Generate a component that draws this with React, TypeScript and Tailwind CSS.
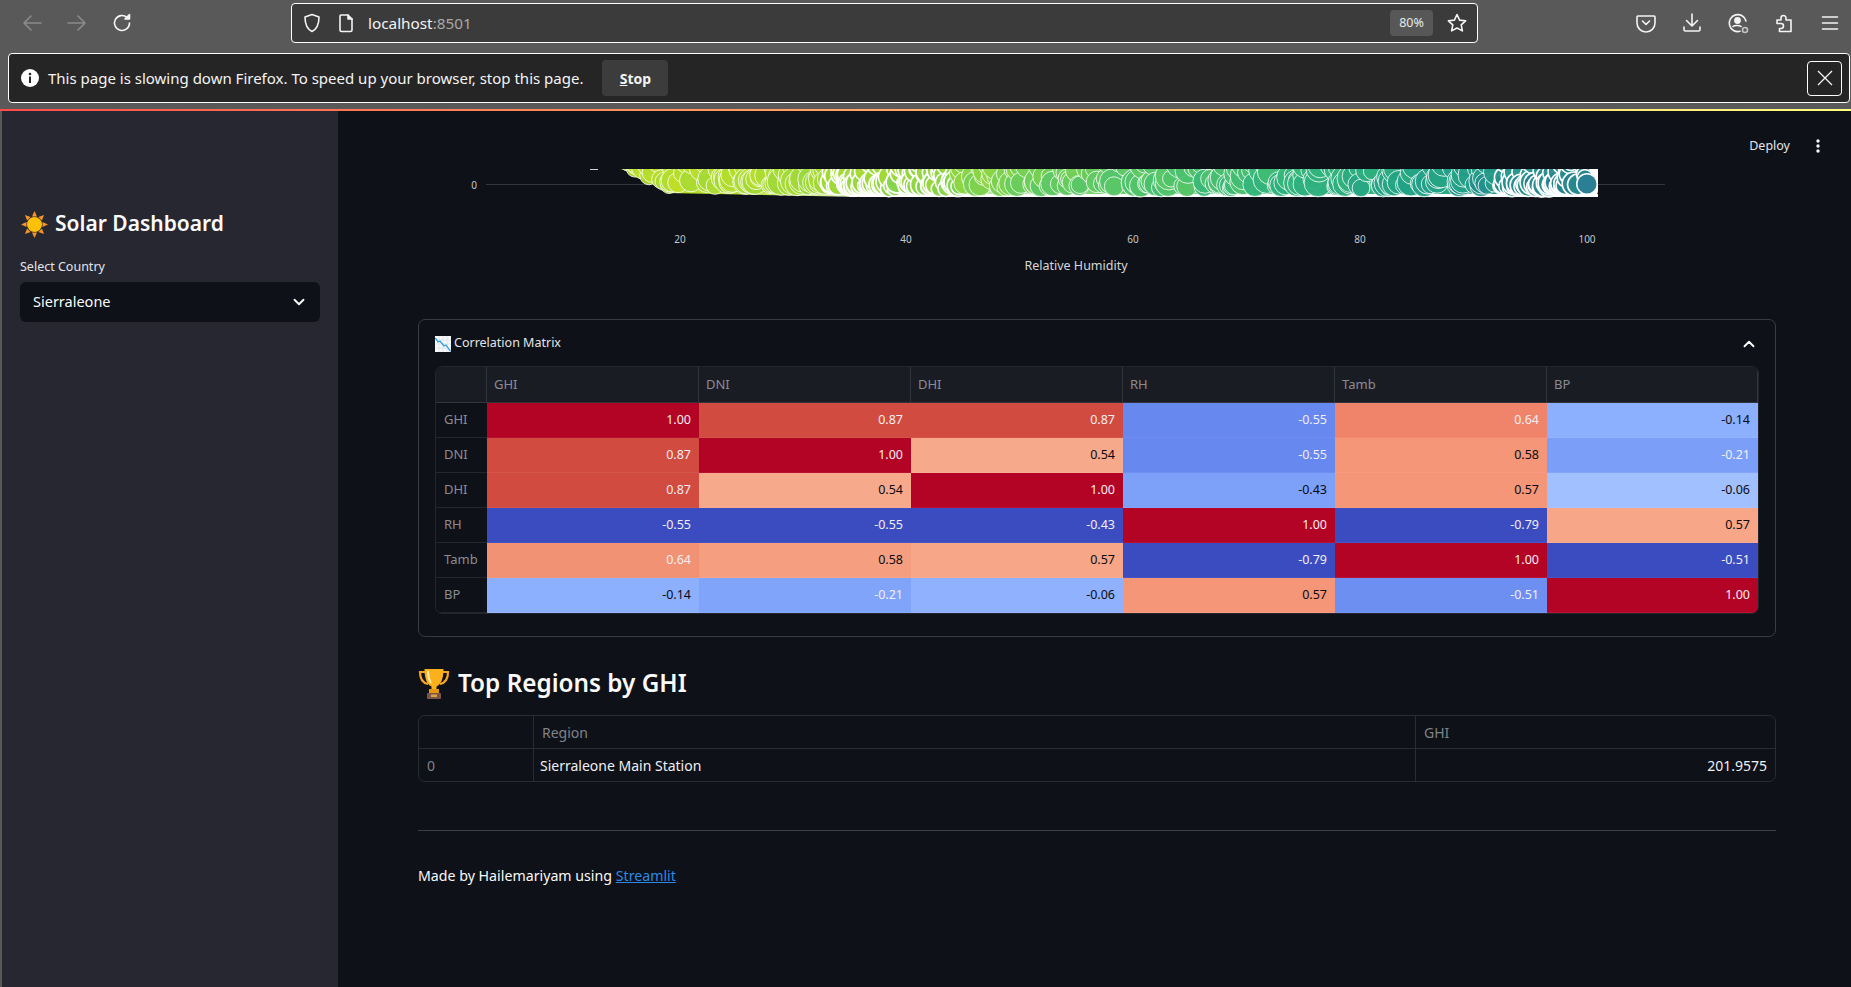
import React from 'react';
import { ChevronDown, ChevronUp } from 'lucide-react';

type Cell = { v: string; c: string };

const L = 'text-[#f3eef2]';
const D = 'text-[#0b0b10]';

const columns = ['GHI', 'DNI', 'DHI', 'RH', 'Tamb', 'BP'];

// correlation matrix, colours read off the reference
const matrix: { name: string; cells: Cell[] }[] = [
    {
        name: 'GHI',
        cells: [
            { v: '1.00', c: `bg-[#b40426] ${L}` },
            { v: '0.87', c: `bg-[#d24b40] ${L}` },
            { v: '0.87', c: `bg-[#d24b40] ${L}` },
            { v: '-0.55', c: `bg-[#6788ee] ${L}` },
            { v: '0.64', c: `bg-[#f0846a] ${L}` },
            { v: '-0.14', c: `bg-[#8caffe] ${D}` },
        ],
    },
    {
        name: 'DNI',
        cells: [
            { v: '0.87', c: `bg-[#d24b40] ${L}` },
            { v: '1.00', c: `bg-[#b40426] ${L}` },
            { v: '0.54', c: `bg-[#f7a98b] ${D}` },
            { v: '-0.55', c: `bg-[#6788ee] ${L}` },
            { v: '0.58', c: `bg-[#f59679] ${D}` },
            { v: '-0.21', c: `bg-[#7b9ff9] ${L}` },
        ],
    },
    {
        name: 'DHI',
        cells: [
            { v: '0.87', c: `bg-[#d24b40] ${L}` },
            { v: '0.54', c: `bg-[#f7a98b] ${D}` },
            { v: '1.00', c: `bg-[#b40426] ${L}` },
            { v: '-0.43', c: `bg-[#7da0f9] ${D}` },
            { v: '0.57', c: `bg-[#f59679] ${D}` },
            { v: '-0.06', c: `bg-[#a1c0ff] ${D}` },
        ],
    },
    {
        name: 'RH',
        cells: [
            { v: '-0.55', c: `bg-[#3b4cc0] ${L}` },
            { v: '-0.55', c: `bg-[#3b4cc0] ${L}` },
            { v: '-0.43', c: `bg-[#3b4cc0] ${L}` },
            { v: '1.00', c: `bg-[#b40426] ${L}` },
            { v: '-0.79', c: `bg-[#3b4cc0] ${L}` },
            { v: '0.57', c: `bg-[#f7a688] ${D}` },
        ],
    },
    {
        name: 'Tamb',
        cells: [
            { v: '0.64', c: `bg-[#f29274] ${L}` },
            { v: '0.58', c: `bg-[#f59f80] ${D}` },
            { v: '0.57', c: `bg-[#f7a688] ${D}` },
            { v: '-0.79', c: `bg-[#3b4cc0] ${L}` },
            { v: '1.00', c: `bg-[#b40426] ${L}` },
            { v: '-0.51', c: `bg-[#3b4cc0] ${L}` },
        ],
    },
    {
        name: 'BP',
        cells: [
            { v: '-0.14', c: `bg-[#8caffe] ${D}` },
            { v: '-0.21', c: `bg-[#81a4fb] ${L}` },
            { v: '-0.06', c: `bg-[#8fb1fe] ${D}` },
            { v: '0.57', c: `bg-[#f59679] ${D}` },
            { v: '-0.51', c: `bg-[#6c8ff1] ${L}` },
            { v: '1.00', c: `bg-[#b40426] ${L}` },
        ],
    },
];

// seeded so every render draws the same bubbles
function makeRandom(seed: number) {
    let s = seed;
    return () => {
        s = (s * 1664525 + 1013904223) % 4294967296;
        return s / 4294967296;
    };
}

const stops: [number, number, number][] = [
    [190, 223, 38],
    [150, 215, 60],
    [94, 201, 98],
    [53, 183, 121],
    [33, 160, 135],
    [38, 130, 142],
];

function viridis(t: number) {
    const p = Math.min(0.999, Math.max(0, t)) * (stops.length - 1);
    const i = Math.floor(p);
    const f = p - i;
    const a = stops[i];
    const b = stops[i + 1];
    return `rgb(${a.map((n, k) => Math.round(n + (b[k] - n) * f)).join(',')})`;
}

// chart origin is 418px from the window's left, main's top from its top
const X0 = 618 - 418;
const X1 = 1598 - 418;

function bottomEdge(x: number) {
    const px = x + 418;
    if (px < 665) return 58 + ((px - 618) / 47) * 24;
    if (px < 860) return 83 + ((px - 665) / 195) * 3;
    return 86;
}

function makeBubbles() {
    const rand = makeRandom(42);
    const out: { x: number; y: number; r: number; fill: string; w: number }[] = [];
    for (let x = X0 + 10; x < X1 - 12; x += 1) {
        const px = x + 418;
        // colour scale bends: lime holds until well past the middle
        const t = Math.pow((px - 618) / 980, 1.4);
        const whiteZone = (px > 830 && px < 960) || px > 1500;
        // most of the plot is sparse enough that whole bubbles stay visible
        if (!whiteZone && rand() > 0.42) continue;
        if (whiteZone && rand() > 0.8) continue;
        const r = whiteZone ? 7 + rand() * 5 : 8 + rand() * 6;
        const low = rand() < 0.4;
        const bottom = bottomEdge(x);
        const y = low ? bottom - r - rand() * 4 : 50 + rand() * Math.max(4, bottom - r - 50);
        out.push({
            x,
            y,
            r,
            fill: viridis(t + (low ? 0.06 : 0) + (rand() - 0.5) * 0.07),
            w: whiteZone ? 1.6 : 0.8,
        });
    }
    return out;
}

const bubbles = makeBubbles();

function BubbleChart() {
    return (
        <svg width="1357" height="208" viewBox="0 0 1357 208" className="block">
            <defs>
                <clipPath id="plot">
                    <rect x="0" y="58" width="1180" height="60" />
                </clipPath>
                <linearGradient id="band" gradientUnits="userSpaceOnUse" x1="200" x2="1180" y1="0" y2="0">
                    <stop offset="0" stopColor="#bfdf30" />
                    <stop offset="0.12" stopColor="#b5de2b" />
                    <stop offset="0.24" stopColor="#dff2c8" />
                    <stop offset="0.33" stopColor="#cfeec0" />
                    <stop offset="0.5" stopColor="#70cf66" />
                    <stop offset="0.76" stopColor="#36b67a" />
                    <stop offset="0.92" stopColor="#24a08a" />
                    <stop offset="1" stopColor="#e8f2f4" />
                </linearGradient>
            </defs>
            <line x1="68" x2="1247" y1="73.5" y2="73.5" stroke="#33363e" />
            <text x="59" y="78" textAnchor="end" fontSize="10" fill="#c4c6cc">0</text>
            <g clipPath="url(#plot)">
                <rect x="172" y="58" width="8" height="1" fill="#cfd0d2" />
                <rect x="1130" y="40" width="50" height="46" rx="6" fill="#ffffff" />
                <path d="M202 58 225 62 243 72 249 82 442 86H1170V58Z" fill="url(#band)" />
                <rect x="442" y="83" width="738" height="3" fill="#ffffff" />
                {bubbles.map((b, i) => (
                    <circle key={i} cx={b.x} cy={b.y} r={b.r} fill={b.fill} fillOpacity={0.94} stroke="#ffffff" strokeWidth={b.w} />
                ))}
                <circle cx="1169" cy="73" r="11" fill="#ffffff" />
                <circle cx="1169" cy="73" r="9.500" fill="#2a7f94" />
            </g>
            {[
                { x: 262, t: '20' },
                { x: 488, t: '40' },
                { x: 715, t: '60' },
                { x: 942, t: '80' },
                { x: 1169, t: '100' },
            ].map((tick) => (
                <text key={tick.t} x={tick.x} y="132" textAnchor="middle" fontSize="10" fill="#c4c6cc">
                    {tick.t}
                </text>
            ))}
            <text x="658" y="159" textAnchor="middle" fontSize="12.500" fill="#d6d7da">Relative Humidity</text>
        </svg>
    );
}

function SunEmoji() {
    const rays = [0, 45, 90, 135, 180, 225, 270, 315];
    return (
        <svg width="27" height="27" viewBox="0 0 27 27" className="shrink-0">
            {rays.map((deg) => (
                <path key={deg} d="M11 5.500 13.500 0 16 5.500Z" fill="#f79329" transform={`rotate(${deg} 13.500 13.500)`} />
            ))}
            <circle cx="13.500" cy="13.500" r="7.500" fill="#ffc107" />
        </svg>
    );
}

function ChartEmoji() {
    return (
        <svg width="16" height="16" viewBox="0 0 16 16" className="shrink-0">
            <rect width="16" height="16" fill="#f5f7f9" />
            <path d="M0 4h16M0 8h16M0 12h16M4 0v16M8 0v16M12 0v16" stroke="#c9d6e2" strokeWidth="0.5" />
            <path d="M0.500 2 3 6 5 5 9 10 11 9 15.500 15.500" fill="none" stroke="#2d9be0" strokeWidth="1.300" />
        </svg>
    );
}

function TrophyEmoji() {
    return (
        <svg width="32" height="32" viewBox="0 0 32 32" className="shrink-0">
            <path d="M7 4H2c0 7 3 11 8 12M25 4h5c0 7-3 11-8 12" fill="none" stroke="#f5a623" strokeWidth="2.200" />
            <path d="M6.500 1h19c0 9-2 15-7 17.500v3h-5v-3C8.500 16 6.500 10 6.500 1Z" fill="#fbb11c" />
            <path d="M10 3c0 5 1 9 3 12" fill="none" stroke="#ffe9a8" strokeWidth="2" />
            <rect x="11" y="21" width="10" height="4" fill="#e8960f" />
            <rect x="9" y="25" width="14" height="6" rx="1" fill="#7a5548" />
            <rect x="13" y="26.500" width="6" height="2.500" fill="#d9a441" />
        </svg>
    );
}

// Firefox toolbar icons, drawn to match its own glyphs
function ToolIcon({ children, className, size = 22 }: { children: React.ReactNode; className?: string; size?: number }) {
    return (
        <svg width={size} height={size} viewBox="0 0 22 22" fill="none" stroke="currentColor" strokeWidth="1.600" strokeLinecap="round" strokeLinejoin="round" className={className}>
            {children}
        </svg>
    );
}

function Toolbar() {
    return (
        <div className="h-[46px] mb-[7px] flex items-center shrink-0">
            <div className="flex items-center gap-[23px] ml-[21px] w-[270px]">
                <ToolIcon className="text-[#8b8b8b]"><path d="M20 11H3M10 4l-7 7 7 7" /></ToolIcon>
                <ToolIcon className="text-[#8b8b8b]"><path d="M2 11h17M12 4l7 7-7 7" /></ToolIcon>
                <ToolIcon className="text-[#f4f4f4]">
                    <path d="M18.500 11a7.500 7.500 0 1 1-2.500-5.600" />
                    <path d="M18.500 2.500V7h-4.500z" fill="currentColor" />
                </ToolIcon>
            </div>
            <div className="w-[1187px] h-[40px] rounded-[4px] border border-white bg-[#3b3b3b] flex items-center pl-[9px] pr-[8px]">
                <ToolIcon className="text-[#f4f4f4]"><path d="M11 2.500 18 5c0 7-2 12-7 14.500C6 17 4 12 4 5z" /></ToolIcon>
                <ToolIcon className="text-[#f4f4f4] ml-[12px]"><path d="M6 3h7l4 4v11a1.500 1.500 0 0 1-1.500 1.500h-9A1.500 1.500 0 0 1 5 18V4a1 1 0 0 1 1-1Z" /><path d="M13 3v4h4" fill="currentColor" /></ToolIcon>
                <span className="ml-[11px] text-[15.300px] text-[#f4f4f4]">localhost<span className="text-[#a8a8a8]">:8501</span></span>
                <div className="ml-auto w-[43px] h-[26px] rounded-[4px] bg-[#575757] flex items-center justify-center text-[12.500px] text-[#e8e8e8]">80%</div>
                <ToolIcon className="text-[#f4f4f4] ml-[13px] mr-[1px]"><path d="m11 2.500 2.600 5.600 6 .7-4.400 4.100 1.200 6L11 16l-5.400 2.900 1.200-6L2.400 8.800l6-.7z" /></ToolIcon>
            </div>
            <div className="flex items-center ml-[157px] gap-[24px]">
                <ToolIcon className="text-[#f4f4f4]">
                    <path d="M3 4h16a1 1 0 0 1 1 1v6a9 9 0 0 1-18 0V5a1 1 0 0 1 1-1Z" />
                    <path d="m7.500 9 3.500 3.500L14.500 9" />
                </ToolIcon>
                <ToolIcon className="text-[#f4f4f4]">
                    <path d="M11 2v11.500M5.500 8.500l5.500 5.500 5.500-5.500M3 15v2.500A1.500 1.500 0 0 0 4.500 19h13a1.500 1.500 0 0 0 1.500-1.500V15" />
                </ToolIcon>
                <ToolIcon className="text-[#f4f4f4]">
                    <path d="M19 9a8.500 8.500 0 1 0-6 10.300" />
                    <circle cx="10.500" cy="8.500" r="2.600" fill="currentColor" />
                    <path d="M6 14.500c1-1.300 7-1.300 8 0" />
                    <circle cx="18" cy="18" r="2.500" stroke="#c4c4c4" />
                </ToolIcon>
                <ToolIcon className="text-[#f4f4f4]">
                    <path d="M4 8h4V6a2.500 2.500 0 0 1 5 0v2h5v11.500H6.500v-3H8a2.500 2.500 0 0 0 0-5H4z" />
                </ToolIcon>
                <ToolIcon className="text-[#f4f4f4]"><path d="M3.500 5h15M3.500 11h15M3.500 17h15" /></ToolIcon>
            </div>
        </div>
    );
}

function SlowPageBar() {
    return (
        <div className="ml-[8px] mr-[1px] h-[50px] shrink-0 rounded-[4px] border border-white bg-[#252525] flex items-center pl-[12px] pr-[7px]">
            <svg width="18" height="18" viewBox="0 0 18 18" className="shrink-0">
                <circle cx="9" cy="9" r="9" fill="#ffffff" />
                <rect x="8" y="7.500" width="2" height="6.500" fill="#252525" />
                <circle cx="9" cy="5" r="1.300" fill="#252525" />
            </svg>
            <span className="ml-[9px] text-[15px] text-[#f4f4f4] whitespace-nowrap">This page is slowing down Firefox. To speed up your browser, stop this page.</span>
            <div className="ml-[19px] w-[66px] h-[36px] rounded-[4px] bg-[#3c3c3c] flex items-center justify-center text-[14px] font-bold text-[#f4f4f4]"><span><u>S</u>top</span></div>
            <div className="ml-auto w-[35px] h-[35px] rounded-[4px] border border-white flex items-center justify-center">
                <svg width="16" height="16" viewBox="0 0 16 16" stroke="#f4f4f4" strokeWidth="1.300"><path d="M1 1l14 14M15 1 1 15" /></svg>
            </div>
        </div>
    );
}

function Sidebar() {
    return (
        <aside className="ml-[2px] w-[336px] shrink-0 bg-[#262730] px-[18px] pt-[98px]">
            <div className="flex items-center gap-[7px] ml-[1px] h-[30px]">
                <SunEmoji />
                <span className="text-[21px] font-semibold text-[#fafafa] whitespace-nowrap">Solar Dashboard</span>
            </div>
            <div className="mt-[18px] text-[12.500px] text-[#e4e4e8] leading-[20px]">Select Country</div>
            <div className="mt-[5px] h-[40px] rounded-[6px] bg-[#0e1117] flex items-center justify-between pl-[13px] pr-[12px] text-[14.500px] text-[#fafafa]">
                Sierraleone
                <ChevronDown size={18} strokeWidth={2.500} />
            </div>
        </aside>
    );
}

function CorrelationMatrix() {
    return (
        <div className="rounded-[7px] border border-[#3a3c44] px-[16px] pb-[22px]">
            <div className="h-[46px] flex items-center pt-[1px]">
                <ChartEmoji />
                <span className="ml-[3px] text-[12.500px] text-[#e4e4e8]">Correlation Matrix</span>
                <ChevronUp size={18} strokeWidth={2.500} className="ml-auto mr-[1px] text-[#fafafa]" />
            </div>
            <div className="rounded-[7px] border border-[#24262d] overflow-hidden grid grid-cols-[51px_repeat(5,212px)_211px] text-[12.500px]">
                <div className="h-[36px] bg-[#1a1c24] border-r border-b border-[#33353d]" />
                {columns.map((col) => (
                    <div key={col} className="h-[36px] bg-[#1a1c24] border-r border-b border-[#33353d] flex items-center pl-[7px] text-[13px] text-[#8a8c94]">{col}</div>
                ))}
                {matrix.map((row) => (
                    <React.Fragment key={row.name}>
                        <div className="h-[35px] border-b border-[#24262d] flex items-center pl-[8px] text-[13px] text-[#8a8c94]">{row.name}</div>
                        {row.cells.map((cell, i) => (
                            <div key={i} className={`h-[35px] border-b border-white/5 flex items-center justify-end pr-[8px] ${cell.c}`}>{cell.v}</div>
                        ))}
                    </React.Fragment>
                ))}
            </div>
        </div>
    );
}

function TopRegions() {
    return (
        <div className="rounded-[7px] border border-[#2a2c33] grid grid-cols-[115px_882px_1fr] text-[14px]">
            <div className="h-[33px] border-r border-b border-[#2a2c33]" />
            <div className="h-[33px] border-r border-b border-[#2a2c33] flex items-center pl-[8px] text-[#808289]">Region</div>
            <div className="h-[33px] border-b border-[#2a2c33] flex items-center pl-[8px] text-[#808289]">GHI</div>
            <div className="h-[32px] border-r border-[#2a2c33] flex items-center pl-[8px] text-[#808289]">0</div>
            <div className="h-[32px] border-r border-[#2a2c33] flex items-center pl-[6px] text-[#f0f0f2]">Sierraleone Main Station</div>
            <div className="h-[32px] flex items-center justify-end pr-[8px] text-[#f0f0f2]">201.9575</div>
        </div>
    );
}

export default function App() {
    return (
        <div className="w-[1851px] h-[987px] overflow-hidden flex flex-col bg-[#595959] font-['Noto_Sans',sans-serif]">
            <Toolbar />
            <SlowPageBar />
            <div className="mt-[6px] h-[2px] shrink-0 bg-gradient-to-r from-[#ff4b4b] to-[#fffd80]" />
            <div className="flex flex-1 min-h-0">
                <Sidebar />
                <main className="relative flex-1 bg-[#0e1117] pl-[80px] pr-[75px] overflow-hidden">
                    <div className="absolute right-[31px] top-[26px] flex items-center gap-[26px] text-[12.500px] text-[#e4e4e8]">
                        <span>Deploy</span>
                        <svg width="4" height="14" viewBox="0 0 4 14" fill="#fafafa"><circle cx="2" cy="2" r="1.700" /><circle cx="2" cy="7" r="1.700" /><circle cx="2" cy="12" r="1.700" /></svg>
                    </div>
                    <BubbleChart />
                    <CorrelationMatrix />
                    <div className="h-[78px] pt-[15px] flex items-center gap-[8px]">
                        <TrophyEmoji />
                        <h2 className="text-[24.300px] font-semibold text-[#fafafa]">Top Regions by GHI</h2>
                    </div>
                    <TopRegions />
                    <hr className="mt-[48px] border-t border-[#3d3f47]" />
                    <p className="mt-[35px] text-[14.200px] leading-[20px] text-[#fafafa]">
                        Made by Hailemariyam using <a href="#streamlit" className="text-[#2b8ae8] underline">Streamlit</a>
                    </p>
                </main>
            </div>
        </div>
    );
}
